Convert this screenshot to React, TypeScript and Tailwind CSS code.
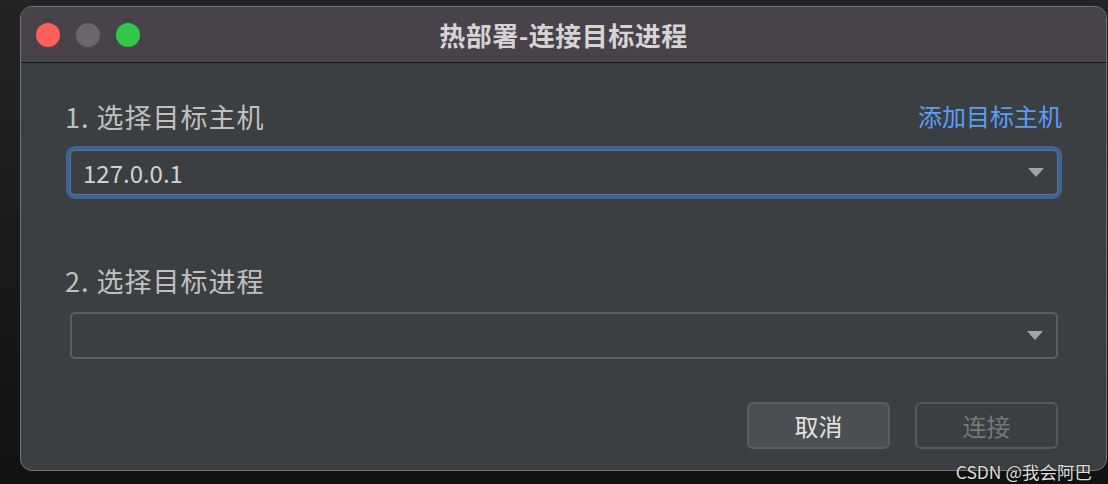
const CJK = { fontFamily: '"Noto Sans CJK SC", "Noto Sans", sans-serif' };

function TrafficLights() {
  return (
    <div className="flex items-center gap-[16px] pl-[15px]">
      <span className="h-[24px] w-[24px] rounded-full bg-[#fe5f57]" />
      <span className="h-[24px] w-[24px] rounded-full bg-[#6b656c]" />
      <span className="h-[24px] w-[24px] rounded-full bg-[#33c748]" />
    </div>
  );
}

function Caret() {
  return (
    <svg width="16" height="9" viewBox="0 0 16 9" className="shrink-0">
      <path d="M0 0 H16 L8 9 Z" fill="#a3a4a8" />
    </svg>
  );
}

function Combo({ value, focused }: { value?: string; focused?: boolean }) {
  return (
    <div
      className={
        focused
          ? 'ml-[4px] flex h-[45px] items-center justify-between rounded-[5px] border border-[#4b79ab] bg-[#3c3f41] pl-[12px] pr-[13px] ring-[4px] ring-[#3d6593]'
          : 'ml-[4px] flex h-[47px] items-center justify-between rounded-[5px] border-2 border-[#5c5f62] bg-[#3c3f41] pl-[12px] pr-[13px]'
      }
    >
      <span className="text-[24px] leading-none text-[#d2d2d2]">{value}</span>
      <Caret />
    </div>
  );
}

export default function App() {
  return (
    <div
      className="relative h-[484px] w-[1108px] overflow-hidden bg-gradient-to-b from-[#242424] to-[#121212] pl-[20px] pt-[6px]"
      style={CJK}
    >
      {/* Dialog window */}
      <div className="flex h-[465px] w-[1087px] flex-col overflow-hidden rounded-[12px] border border-[#727272] bg-[#3c3f41]">
        {/* Title bar */}
        <div className="grid h-[56px] shrink-0 grid-cols-[1fr_auto_1fr] items-center border-b border-[#161616] bg-[#48434a]">
          <TrafficLights />
          <div className="text-[26px] font-bold leading-none tracking-[0.5px] text-[#d6d2d6]">
            热部署-连接目标进程
          </div>
          <div />
        </div>

        {/* Body */}
        <div className="flex flex-col pl-[44px] pr-[44px] pt-[37px]">
          <div className="flex h-[32px] items-center justify-between">
            <span className="text-[27px] leading-none tracking-[1px] text-[#c0c0c0]">1. 选择目标主机</span>
            <span className="text-[24px] leading-none text-[#589df6]">添加目标主机</span>
          </div>
          <div className="mt-[18px] pl-[1px] pr-[4px]">
            <Combo value="127.0.0.1" focused />
          </div>

          <div className="mt-[69px] flex h-[32px] items-center">
            <span className="text-[27px] leading-none tracking-[1px] text-[#c0c0c0]">2. 选择目标进程</span>
          </div>
          <div className="mt-[16px] pl-[1px] pr-[4px]">
            <Combo />
          </div>

          <div className="mt-[43px] flex justify-end gap-[25px] pr-[4px]">
            <button className="flex h-[47px] w-[143px] items-center justify-center rounded-[6px] border-2 border-[#5b5f62] bg-[#4b4f52] text-[24px] leading-none text-[#e2e2e2]">
              取消
            </button>
            <button className="flex h-[47px] w-[143px] items-center justify-center rounded-[6px] border-2 border-[#55595c] bg-[#3c3f41] text-[24px] leading-none text-[#75787b]">
              连接
            </button>
          </div>
        </div>
      </div>

      {/* Watermark */}
      <div className="absolute bottom-[4px] right-[16px] text-[17.5px] leading-none text-[#dcdcdc] [text-shadow:0_0_2px_rgba(0,0,0,0.6)]">
        CSDN @我会阿巴
      </div>
    </div>
  );
}
